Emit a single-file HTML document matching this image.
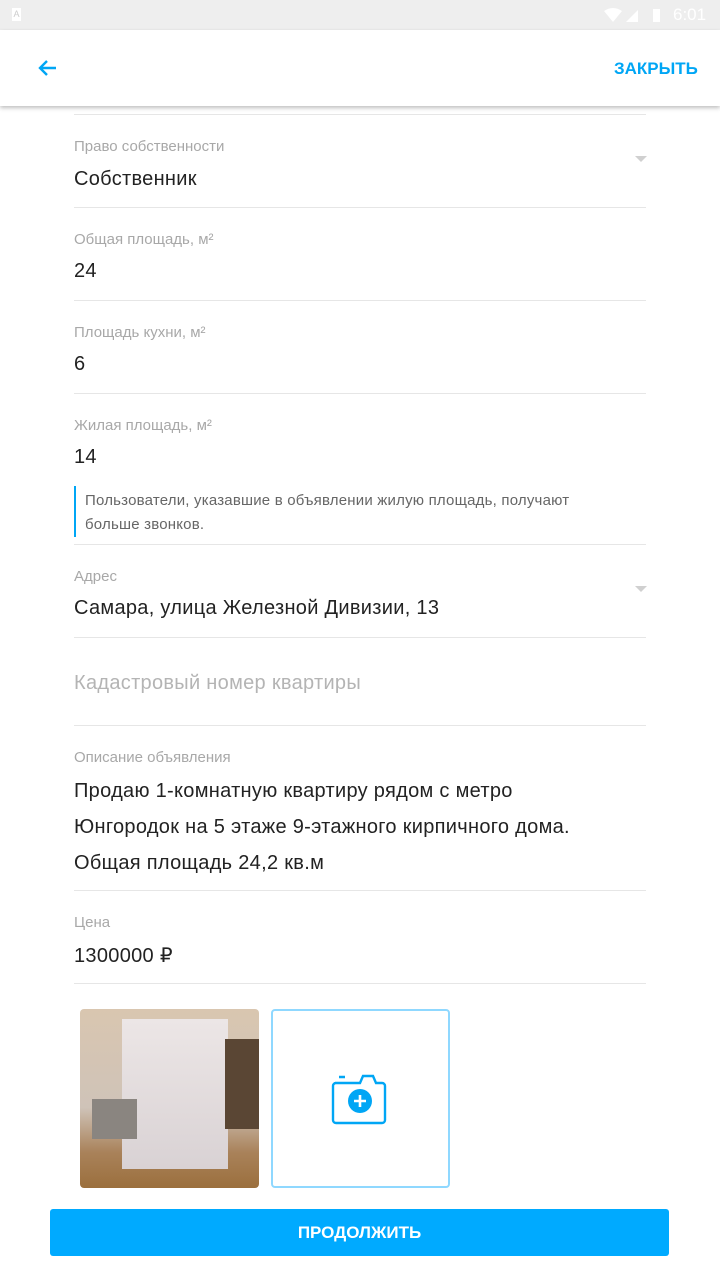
<!DOCTYPE html><html><head><meta charset="utf-8"><style>
body{margin:0;width:720px;height:1280px;overflow:hidden;background:#fff;font-family:"Liberation Sans",sans-serif;position:relative}
.a{position:absolute}
.lbl{position:absolute;left:74px;font-size:15px;color:#a8a8a8}
.val{position:absolute;left:74px;font-size:20px;color:#222;letter-spacing:0.3px}
.hr{position:absolute;left:74px;width:572px;height:1px;background:#e6e6e6}
.tri{position:absolute;left:635px;width:0;height:0;border-left:6px solid transparent;border-right:6px solid transparent;border-top:6px solid #d0d0d0}
</style></head><body>
<div class="a" style="left:0;top:0;width:720px;height:30px;background:#eeeeee"></div>
<div class="a" style="left:12px;top:8px;width:9px;height:13px;background:#fff;font-size:9px;color:#ccc;text-align:center;line-height:13px">A</div>
<svg class="a" style="left:600px;top:6px" width="75" height="18"><path d="M4 5 Q13 -1 22 5 L13 16Z" fill="#fff"/><path d="M26 16 L38 4 L38 16Z" fill="#fff"/><rect x="53" y="3" width="7" height="13" fill="#fff"/></svg>
<div class="a" style="left:673px;top:5px;font-size:17px;color:#fff">6:01</div>
<div class="a" style="left:0;top:30px;width:720px;height:76px;background:#fff;box-shadow:0 2px 4px rgba(0,0,0,.25)"></div>
<svg class="a" style="left:36px;top:57px" width="24" height="22"><path d="M20 11H4M11 4L4 11L11 18" stroke="#00a6f5" stroke-width="2.4" fill="none"/></svg>
<div class="a" style="left:614px;top:59px;font-size:17px;font-weight:bold;color:#00a6f5">ЗАКРЫТЬ</div>
<div class="hr" style="top:114px"></div>
<div class="lbl" style="top:138px">Право собственности</div><div class="val" style="top:168px">Собственник</div><div class="tri" style="top:156px"></div>
<div class="hr" style="top:207px"></div>
<div class="lbl" style="top:231px">Общая площадь, м²</div><div class="val" style="top:260px">24</div>
<div class="hr" style="top:300px"></div>
<div class="lbl" style="top:324px">Площадь кухни, м²</div><div class="val" style="top:353px">6</div>
<div class="hr" style="top:393px"></div>
<div class="lbl" style="top:417px">Жилая площадь, м²</div><div class="val" style="top:446px">14</div>
<div class="a" style="left:74px;top:486px;width:2px;height:51px;background:#00a6f5"></div>
<div class="a" style="left:85px;top:489px;font-size:15px;color:#666;line-height:24px;width:560px;letter-spacing:0.2px">Пользователи, указавшие в объявлении жилую площадь, получают<br>больше звонков.</div>
<div class="hr" style="top:544px"></div>
<div class="lbl" style="top:568px">Адрес</div><div class="val" style="top:597px">Самара, улица Железной Дивизии, 13</div><div class="tri" style="top:586px"></div>
<div class="hr" style="top:637px"></div>
<div class="val" style="top:672px;color:#b4b4b4">Кадастровый номер квартиры</div>
<div class="hr" style="top:725px"></div>
<div class="lbl" style="top:749px">Описание объявления</div>
<div class="val" style="top:773px;line-height:36px;width:600px">Продаю 1-комнатную квартиру рядом с метро<br>Юнгородок на 5 этаже 9-этажного кирпичного дома.<br>Общая площадь 24,2 кв.м</div>
<div class="hr" style="top:890px"></div>
<div class="lbl" style="top:914px">Цена</div><div class="val" style="top:943px">1300000 ₽</div>
<div class="hr" style="top:983px"></div>
<div class="a" style="left:80px;top:1009px;width:179px;height:179px;border-radius:4px;overflow:hidden;background:linear-gradient(180deg,#d9c6b0 0%,#cfc3b8 55%,#a9825a 80%,#9b6f3d 100%)">
<div class="a" style="left:42px;top:10px;width:106px;height:150px;background:linear-gradient(180deg,#ece6e6,#d9d2d4)"></div>
<div class="a" style="left:145px;top:30px;width:34px;height:90px;background:#5a4634"></div>
<div class="a" style="left:12px;top:90px;width:45px;height:40px;background:#8a8580"></div>
</div>
<div class="a" style="left:271px;top:1009px;width:175px;height:175px;border:2px solid #8fd8ff;border-radius:4px"></div>
<svg class="a" style="left:330px;top:1070px" width="62" height="58"><path d="M9 7h6M5 13h25l3-7h10l3 7h6a3 3 0 0 1 3 3v34a3 3 0 0 1-3 3H6a3 3 0 0 1-3-3V16a3 3 0 0 1 3-3z" stroke="#00a6f5" stroke-width="2.4" fill="none"/><circle cx="30" cy="31" r="12" fill="#00a6f5"/><path d="M30 25v12M24 31h12" stroke="#fff" stroke-width="2.6"/></svg>
<div class="a" style="left:50px;top:1209px;width:619px;height:47px;background:#00aaff;border-radius:3px;color:#fff;font-weight:bold;font-size:17px;text-align:center;line-height:47px">ПРОДОЛЖИТЬ</div>
</body></html>
